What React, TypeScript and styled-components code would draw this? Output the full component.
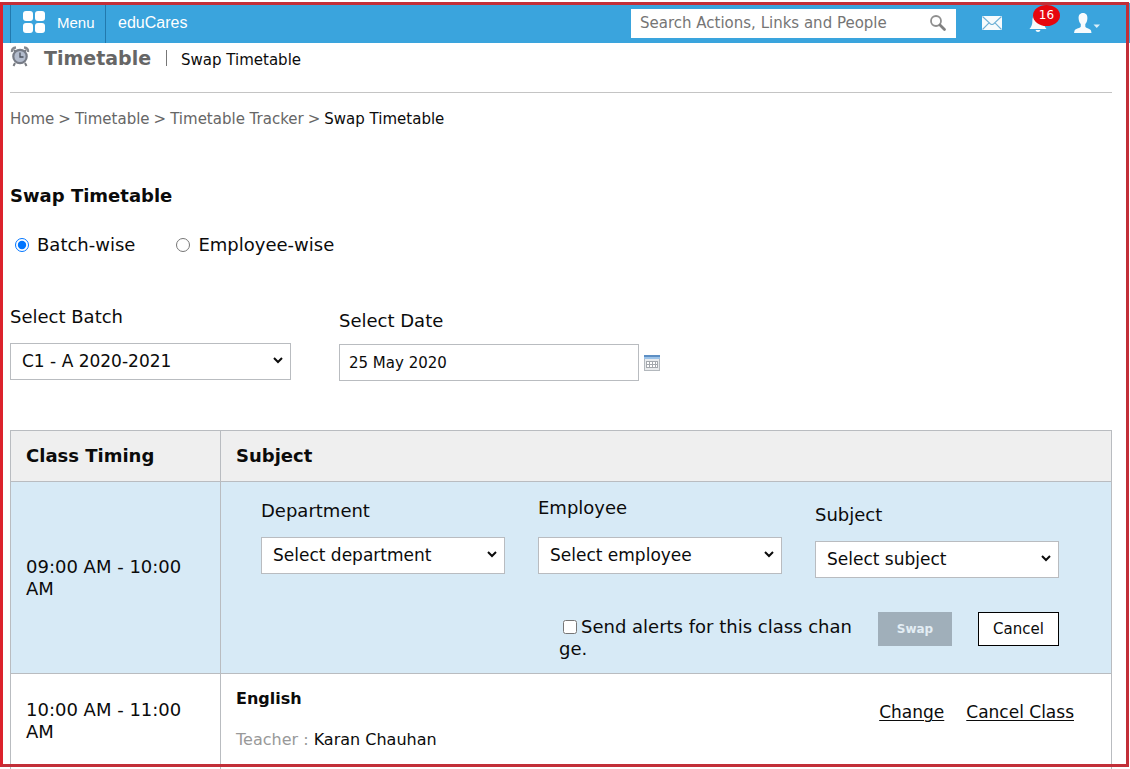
import React, { useState } from "react";
import styled, { createGlobalStyle } from "styled-components";

const GlobalStyle = createGlobalStyle`
  * { box-sizing: border-box; }
  body {
    margin: 0;
    background: #fff;
    color: #0b0b0b;
    font-family: "DejaVu Sans", Verdana, sans-serif;
    font-size: 15px;
  }
  button, input, select { font-family: inherit; color: inherit; }
`;

const Frame = styled.div`
  position: fixed;
  inset: 2px 1px 2px 0;
  border: 3px solid #c22f38;
  border-left-color: #dc222c;
  pointer-events: none;
  z-index: 2;
`;

const TopBar = styled.header`
  display: flex;
  align-items: center;
  height: 40px;
  margin-top: 3px;
  padding: 0 29px 0 10px;
  background: #3aa4dd;
  color: #fff;
`;

const MenuButton = styled.button`
  display: flex;
  align-items: center;
  gap: 12px;
  align-self: stretch;
  width: 96px;
  padding: 0 0 2px 12px;
  border: solid #2279ad;
  border-width: 0 1px;
  background: none;
  color: #fff;
  font-family: "Liberation Sans", Arial, sans-serif;
  font-size: 15px;
`;

const Brand = styled.a`
  flex: 1;
  padding-left: 12px;
  color: #fff;
  font-family: "Liberation Sans", Arial, sans-serif;
  font-size: 16px;
  text-decoration: none;
`;

const SearchBox = styled.form`
  display: flex;
  align-items: center;
  width: 325px;
  height: 29px;
  padding: 0 9px;
  background: #fff;
`;

const SearchInput = styled.input`
  flex: 1;
  min-width: 0;
  padding: 0;
  border: 0;
  outline: 0;
  background: none;
  font-size: 15px;
  &::placeholder { color: #757575; opacity: 1; }
`;

const IconButton = styled.button`
  position: relative;
  display: flex;
  padding: 0;
  border: 0;
  background: none;
`;

const BarIcons = styled.nav`
  display: flex;
  align-items: center;
  gap: 27px;
  margin-left: 26px;
`;

const Badge = styled.span`
  position: absolute;
  left: 4px;
  top: -9px;
  width: 27px;
  height: 21px;
  border-radius: 50%;
  background: #e6060e;
  color: #fff;
  font-size: 12px;
  line-height: 21px;
  text-align: center;
`;

const Page = styled.main`
  padding: 0 18px 0 10px;
`;

const TitleRow = styled.div`
  display: flex;
  align-items: baseline;
  height: 50px;
  padding-top: 3px;
  border-bottom: 1px solid #c4c4c4;
`;

const Title = styled.h1`
  margin: 0 15px 0 14px;
  color: #666;
  font-size: 19px;
  line-height: 24px;
`;

const Divider = styled.span`
  width: 1px;
  height: 16px;
  margin-right: 14px;
  background: #777;
  align-self: flex-start;
  margin-top: 4px;
`;

const ClockHolder = styled.span`
  align-self: flex-start;
  height: 20px;
`;

const Crumbs = styled.nav`
  display: flex;
  gap: 4px;
  padding-top: 16px;
  line-height: 20px;
  color: #666;
  a { color: #666; text-decoration: none; }
  strong { color: #0b0b0b; font-weight: normal; }
`;

const Heading = styled.h2`
  margin: 56px 0 0;
  font-size: 18px;
  line-height: 22px;
`;

const RadioRow = styled.div`
  display: flex;
  gap: 41px;
  margin-top: 27px;
  padding-left: 5px;
  font-size: 18px;
  line-height: 22px;
`;

const Choice = styled.label`
  display: flex;
  align-items: center;
  gap: 8px;
  input { width: 14px; height: 14px; margin: 0; }
`;

const Filters = styled.div`
  display: flex;
  gap: 48px;
  margin-top: 50px;
`;

const Field = styled.div<{ $width: number; $top?: number; $gap?: number }>`
  display: flex;
  flex-direction: column;
  gap: ${(p) => p.$gap ?? 15}px;
  width: ${(p) => p.$width}px;
  padding-top: ${(p) => p.$top ?? 0}px;
`;

const FieldLabel = styled.label`
  font-size: 18px;
  line-height: 22px;
`;

const SelectBox = styled.div`
  display: flex;
  height: 37px;
  padding: 0 4px 2px 0;
  border: 1px solid #b9bcc0;
  background: #fff;
`;

const Select = styled.select`
  flex: 1;
  min-width: 0;
  padding: 0 7px;
  border: 0;
  border-radius: 0;
  background: none;
  font-size: 17px;
`;

const DateLine = styled.div`
  display: flex;
  align-items: center;
  gap: 5px;
`;

const DateInput = styled.input`
  flex: 1;
  min-width: 0;
  height: 37px;
  padding: 0 9px;
  border: 1px solid #b9bcc0;
  font-size: 15px;
`;

const Timetable = styled.table`
  width: 100%;
  margin-top: 49px;
  border-collapse: collapse;
  table-layout: fixed;
  font-size: 18px;
  line-height: 22px;
`;

const HeadCell = styled.th<{ $width?: number }>`
  width: ${(p) => (p.$width ? `${p.$width}px` : "auto")};
  height: 51px;
  padding: 0 15px;
  border: 1px solid #b9bcc0;
  background: #efefef;
  text-align: left;
`;

const Row = styled.tr<{ $height: number; $active?: boolean }>`
  height: ${(p) => p.$height}px;
  background: ${(p) => (p.$active ? "#d7eaf6" : "#fff")};
  &:last-child td { padding-bottom: 3px; border-bottom: 0; }
`;

const Cell = styled.td`
  padding: 0 15px;
  border: 1px solid #b9bcc0;
`;

const SwapCell = styled(Cell)`
  padding: 14px 0 0 40px;
  vertical-align: top;
`;

const SwapForm = styled.form`
  width: 798px;
`;

const SwapFields = styled.div`
  display: flex;
  align-items: flex-start;
  gap: 33px;
`;

const SwapActions = styled.div`
  display: flex;
  align-items: flex-start;
  justify-content: flex-end;
  gap: 26px;
  margin-top: 34px;
`;

const AlertChoice = styled.label`
  width: 300px;
  margin: 4px -7px 0 0;
  word-break: break-all;
  input { width: 14px; height: 14px; margin: 0 4px; vertical-align: -1px; }
`;

const ActionButton = styled.button<{ $muted?: boolean }>`
  width: ${(p) => (p.$muted ? 74 : 81)}px;
  height: 34px;
  padding: 0;
  border: ${(p) => (p.$muted ? "0" : "1px solid #000")};
  background: ${(p) => (p.$muted ? "#a0afba" : "#fff")};
  color: ${(p) => (p.$muted ? "#e3edf4" : "#0b0b0b")};
  font-size: ${(p) => (p.$muted ? 12 : 15)}px;
  font-weight: ${(p) => (p.$muted ? "bold" : "normal")};
`;

const ClassLine = styled.div`
  display: flex;
  align-items: center;
  justify-content: space-between;
  padding: 0 22px 2px 0;
`;

const ClassInfo = styled.div`
  display: grid;
  gap: 19px;
  font-size: 16px;
`;

const Muted = styled.span`
  color: #999;
`;

const ClassLinks = styled.div`
  display: flex;
  gap: 22px;
  padding-bottom: 16px;
  font-size: 17px;
  a { color: #0b0b0b; text-underline-offset: 2px; text-decoration-thickness: 1px; }
`;

const MenuIcon = () => (
  <svg width="22" height="22" viewBox="0 0 22 22" fill="#fff" aria-hidden="true">
    <rect width="10" height="10" rx="3" />
    <rect x="12" width="10" height="10" rx="3" />
    <rect y="12" width="10" height="10" rx="3" />
    <rect x="12" y="12" width="10" height="10" rx="3" />
  </svg>
);

const SearchIcon = () => (
  <svg width="18" height="18" viewBox="0 0 18 18" fill="none" aria-hidden="true">
    <circle cx="7" cy="7" r="5" stroke="#8f8f8f" strokeWidth="1.8" />
    <path d="M11 11l4.500 4.500" stroke="#808080" strokeWidth="2.800" strokeLinecap="round" />
  </svg>
);

const MailIcon = () => (
  <svg width="20" height="14" viewBox="0 0 20 14" aria-hidden="true">
    <rect width="20" height="14" fill="#f7fbfd" />
    <path d="M0.5 0.5L8.5 8Q10 9 11.5 8L19.5 0.5M0.5 13.5L7 6.8M19.5 13.5L13 6.8" fill="none" stroke="#6fb1d6" strokeWidth="1.1" />
  </svg>
);

const BellIcon = () => (
  <svg width="18" height="18" viewBox="0 0 18 18" fill="#f7fbfd" aria-hidden="true">
    <path d="M9 0C5 0 3.4 3 3.4 6.500C3.400 10.500 2.500 12.500 0.500 15H17.500C15.500 12.500 14.600 10.500 14.600 6.500C14.600 3 13 0 9 0Z" />
    <path d="M6.500 16H11.500Q11 18 9 18Q7 18 6.500 16Z" />
  </svg>
);

const UserIcon = () => (
  <svg width="27" height="21" viewBox="0 0 27 21" fill="#f7fbfd" aria-hidden="true">
    <path d="M9 0C5.800 0 4.400 2.300 4.600 5.300C4.700 8 5.600 9.800 6.800 11V13.500C6.800 15 1.500 15.500 0.600 17.500L0 20H17.500L17 17.500C16 15.500 11.300 15 11.300 13.500V11C12.500 9.800 13.300 8 13.400 5.300C13.600 2.300 12.200 0 9 0Z" />
    <path d="M19.500 11.500H26L22.750 15Z" opacity="0.85" />
  </svg>
);

const ClockIcon = () => (
  <svg width="20" height="21" viewBox="0 0 20 21" aria-hidden="true">
    <path d="M5 17L3.500 20M15 17L16.500 20M4 4L6 6M16 4L14 6" stroke="#777a80" strokeWidth="2" />
    <path d="M2 6Q1.500 2 6 1.500M18 6Q18.500 2 14 1.500" fill="none" stroke="#85888e" strokeWidth="2.400" />
    <circle cx="10" cy="10.500" r="6.700" fill="#b3bccd" stroke="#767b86" strokeWidth="2.200" />
    <path d="M10 6.500V11H13.500" fill="none" stroke="#4b505c" strokeWidth="1.300" />
  </svg>
);

const CalendarIcon = () => (
  <svg width="16" height="16" viewBox="0 0 16 16" aria-hidden="true">
    <rect x="0.500" y="0.500" width="15" height="15" fill="#e9ebed" stroke="#b3b8bd" />
    <rect width="16" height="2" fill="#5d8fc4" />
    <rect y="2" width="16" height="2" fill="#9dc3e8" />
    <rect x="2.500" y="6.500" width="11" height="6" fill="#fff" stroke="#a4a8ad" />
    <path d="M2 9.500H14M5.500 6V13M8.500 6V13M11.500 6V13" stroke="#a4a8ad" />
  </svg>
);

type SwapField = { id: string; label: string; option: string; top: number; gap: number };

const swapFields: SwapField[] = [
  { id: "department", label: "Department", option: "Select department", top: 4, gap: 15 },
  { id: "employee", label: "Employee", option: "Select employee", top: 1, gap: 18 },
  { id: "subject", label: "Subject", option: "Select subject", top: 8, gap: 15 },
];

export default function App() {
  const [mode, setMode] = useState("batch");

  return (
    <>
      <GlobalStyle />
      <Frame />
      <TopBar>
        <MenuButton type="button">
          <MenuIcon />
          Menu
        </MenuButton>
        <Brand href="#">eduCares</Brand>
        <SearchBox role="search" onSubmit={(e) => e.preventDefault()}>
          <SearchInput aria-label="Search" placeholder="Search Actions, Links and People" />
          <IconButton aria-label="Run search">
            <SearchIcon />
          </IconButton>
        </SearchBox>
        <BarIcons>
          <IconButton type="button" aria-label="Messages">
            <MailIcon />
          </IconButton>
          <IconButton type="button" aria-label="Notifications">
            <BellIcon />
            <Badge>16</Badge>
          </IconButton>
          <IconButton type="button" aria-label="Account">
            <UserIcon />
          </IconButton>
        </BarIcons>
      </TopBar>

      <Page>
        <TitleRow>
          <ClockHolder>
            <ClockIcon />
          </ClockHolder>
          <Title>Timetable</Title>
          <Divider />
          <span>Swap Timetable</span>
        </TitleRow>
        <Crumbs aria-label="Breadcrumb">
          <a href="#">Home</a>
          <span>&gt;</span>
          <a href="#">Timetable</a>
          <span>&gt;</span>
          <a href="#">Timetable Tracker</a>
          <span>&gt;</span>
          <strong>Swap Timetable</strong>
        </Crumbs>

        <Heading>Swap Timetable</Heading>
        <RadioRow>
          <Choice>
            <input type="radio" name="mode" checked={mode === "batch"} onChange={() => setMode("batch")} />
            Batch-wise
          </Choice>
          <Choice>
            <input type="radio" name="mode" checked={mode === "employee"} onChange={() => setMode("employee")} />
            Employee-wise
          </Choice>
        </RadioRow>

        <Filters>
          <Field $width={281}>
            <FieldLabel htmlFor="batch">Select Batch</FieldLabel>
            <SelectBox>
              <Select id="batch">
                <option>C1 - A 2020-2021</option>
              </Select>
            </SelectBox>
          </Field>
          <Field $width={321} $top={4} $gap={12}>
            <FieldLabel htmlFor="date">Select Date</FieldLabel>
            <DateLine>
              <DateInput id="date" defaultValue="25 May 2020" />
              <IconButton type="button" aria-label="Open calendar">
                <CalendarIcon />
              </IconButton>
            </DateLine>
          </Field>
        </Filters>

        <Timetable>
          <thead>
            <tr>
              <HeadCell $width={210}>Class Timing</HeadCell>
              <HeadCell>Subject</HeadCell>
            </tr>
          </thead>
          <tbody>
            <Row $height={192} $active>
              <Cell>09:00 AM - 10:00 AM</Cell>
              <SwapCell>
                <SwapForm onSubmit={(e) => e.preventDefault()}>
                  <SwapFields>
                    {swapFields.map((f) => (
                      <Field key={f.id} $width={244} $top={f.top} $gap={f.gap}>
                        <FieldLabel htmlFor={f.id}>{f.label}</FieldLabel>
                        <SelectBox>
                          <Select id={f.id}>
                            <option>{f.option}</option>
                          </Select>
                        </SelectBox>
                      </Field>
                    ))}
                  </SwapFields>
                  <SwapActions>
                    <AlertChoice>
                      <input type="checkbox" />
                      Send alerts for this class change.
                    </AlertChoice>
                    <ActionButton type="submit" $muted>
                      Swap
                    </ActionButton>
                    <ActionButton type="button">Cancel</ActionButton>
                  </SwapActions>
                </SwapForm>
              </SwapCell>
            </Row>
            <Row $height={97}>
              <Cell>10:00 AM - 11:00 AM</Cell>
              <Cell>
                <ClassLine>
                  <ClassInfo>
                    <strong>English</strong>
                    <span>
                      <Muted>Teacher :</Muted> Karan Chauhan
                    </span>
                  </ClassInfo>
                  <ClassLinks>
                    <a href="#">Change</a>
                    <a href="#">Cancel Class</a>
                  </ClassLinks>
                </ClassLine>
              </Cell>
            </Row>
          </tbody>
        </Timetable>
      </Page>
    </>
  );
}
